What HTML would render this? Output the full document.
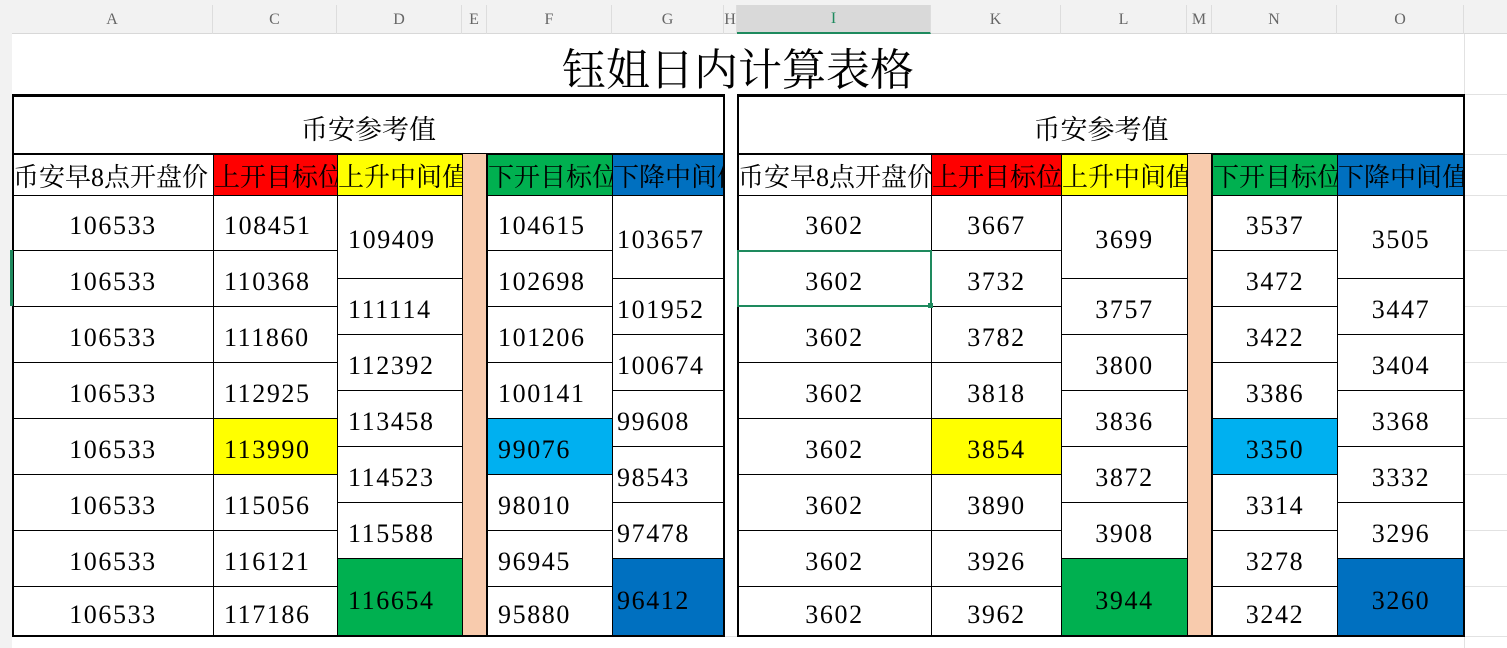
<!DOCTYPE html>
<html><head><meta charset="utf-8"><style>
*{margin:0;padding:0;box-sizing:border-box}
body{width:1507px;height:648px;overflow:hidden;background:#fff;position:relative;font-family:"Liberation Serif","Noto Serif CJK SC",serif;}
.a{position:absolute}
.c{position:absolute;border:1px solid #000;display:flex;align-items:center;justify-content:center;font-size:26px;letter-spacing:1.6px;padding-top:6px;color:#000;white-space:nowrap;overflow:hidden}
.l{justify-content:flex-start;padding-left:10px}
.h{font-size:26px;letter-spacing:0;padding-top:0}
.s{font-size:27px;letter-spacing:0;padding-top:0}
.hl{position:absolute;height:1px;background:#e2e2e2}
.vl{position:absolute;width:1px;background:#e2e2e2}
.col{position:absolute;top:5px;height:29px;display:flex;align-items:center;justify-content:center;font-size:16px;color:#666;border-right:1px solid #ddd}
</style></head><body>
<div class="a" style="left:0;top:0;width:1507px;height:34px;background:#f2f2f2;border-bottom:1px solid #d8d8d8"></div>
<div class="a" style="left:0;top:0;width:12px;height:648px;background:#f2f2f2"></div>
<div id="root"></div>
<script>
var r=document.getElementById('root'),h='';
function d(x1,y1,x2,y2,t,cls,bg,extra){h+='<div class="c '+(cls||'')+'" style="left:'+x1+'px;top:'+y1+'px;width:'+(x2-x1+1)+'px;height:'+(y2-y1+1)+'px;'+(bg?'background:'+bg+';':'')+(extra||'')+'">'+(t||'')+'</div>';}
var cols=[['A',12,213],['C',213,337],['D',337,462],['E',462,487],['F',487,612],['G',612,724],['H',724,737],['I',737,931],['K',931,1061],['L',1061,1187],['M',1187,1212],['N',1212,1337],['O',1337,1464]];
cols.forEach(function(c){h+='<div class="col" style="left:'+c[1]+'px;width:'+(c[2]-c[1])+'px;'+(c[0]=='I'?'background:#d9d9d9;color:#1e8a5e;border-bottom:2px solid #1e8a5e;':'')+'">'+c[0]+'</div>';});
[94,154,195,250,306,362,418,474,530,586,636].forEach(function(y){h+='<div class="hl" style="left:1464px;width:43px;top:'+y+'px"></div>';});
h+='<div class="vl" style="left:1464px;top:34px;height:614px"></div>';
h+='<div class="hl" style="left:12px;width:1495px;top:636px"></div>';
h+='<div class="a" style="left:12px;top:36px;width:1452px;height:60px;display:flex;align-items:center;justify-content:center;font-size:44px">钰姐日内计算表格</div>';
var rows=[195,250,306,362,418,474,530,586,636],mer=[195,278,334,390,446,502,558,636];
function tbl(X,data,left){
 var cx=X;
 var x0=cx[0],xe=cx[6];
 d(x0,94,xe,154,'币安参考值','s','', 'border-width:3px 2px 2px 2px;padding-top:4px');
 var hd=[['币安早8点开盘价',''],['上开目标位','#ff0000'],['上升中间值','#ffff00'],['','#f8cbad'],['下开目标位','#00b050'],['下降中间值','#0070c0']];
 for(var i=0;i<6;i++){ if(i==3)continue; d(cx[i],154,cx[i+1],195,hd[i][0],'h l',hd[i][1],'padding-left:0;');}
 h+='<div class="a" style="left:'+cx[3]+'px;top:154px;width:'+(cx[4]-cx[3])+'px;height:482px;background:#f8cbad;border-left:1px solid #000;border-right:1px solid #000"></div>';
 var L=left?'l':'';
 for(var k=0;k<8;k++){
  d(cx[0],rows[k],cx[1],rows[k+1],data[0][k]);
  d(cx[1],rows[k],cx[2],rows[k+1],data[1][k],L,k==4?'#ffff00':'');
  d(cx[4],rows[k],cx[5],rows[k+1],data[3][k],L,k==4?'#00b0f0':'');
 }
 for(var k=0;k<7;k++){
  d(cx[2],mer[k],cx[3],mer[k+1],data[2][k],L,k==6?'#00b050':'');
  d(cx[5],mer[k],cx[6],mer[k+1],data[4][k],left?'l':'',k==6?'#0070c0':'',left?'padding-left:4px':'');
 }
 h+='<div class="a" style="left:'+x0+'px;top:94px;width:'+(xe-x0+1)+'px;height:543px;border:2px solid #000;border-top-width:3px"></div>';
}
tbl([12,213,337,462,487,612,724],[
 ['106533','106533','106533','106533','106533','106533','106533','106533'],
 ['108451','110368','111860','112925','113990','115056','116121','117186'],
 ['109409','111114','112392','113458','114523','115588','116654'],
 ['104615','102698','101206','100141','99076','98010','96945','95880'],
 ['103657','101952','100674','99608','98543','97478','96412']],true);
tbl([737,931,1061,1187,1212,1337,1464],[
 ['3602','3602','3602','3602','3602','3602','3602','3602'],
 ['3667','3732','3782','3818','3854','3890','3926','3962'],
 ['3699','3757','3800','3836','3872','3908','3944'],
 ['3537','3472','3422','3386','3350','3314','3278','3242'],
 ['3505','3447','3404','3368','3332','3296','3260']],false);
h+='<div class="a" style="left:737px;top:250px;width:195px;height:57px;border:2px solid #1e8a5e"></div>';
h+='<div class="a" style="left:928px;top:303px;width:5px;height:5px;background:#1e8a5e"></div>';
h+='<div class="a" style="left:10px;top:250px;width:3px;height:56px;background:#1e8a5e"></div>';
r.innerHTML=h;
</script>
</body></html>
